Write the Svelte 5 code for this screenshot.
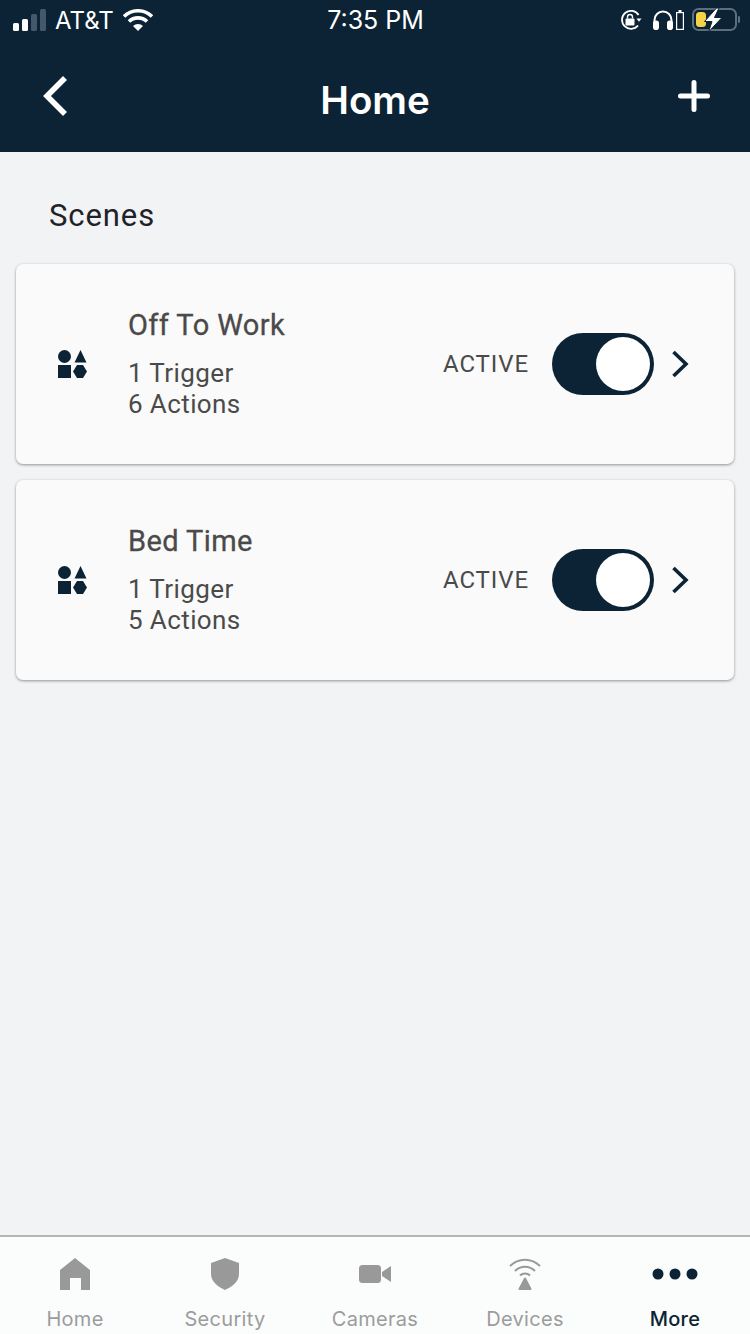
<script lang="ts">
  const scenes = [
    { name: "Off To Work", triggers: "1 Trigger", actions: "6 Actions" },
    { name: "Bed Time", triggers: "1 Trigger", actions: "5 Actions" }
  ];
  const tabs = ["Home", "Security", "Cameras", "Devices", "More"];
</script>

<main>
  <header>
    <div class="status">
      <div class="status-left">
        <svg width="34" height="22" viewBox="0 0 34 22">
          <rect x="0" y="14" width="6" height="8" rx="1.5" fill="#fff" />
          <rect x="9" y="10" width="6" height="12" rx="1.5" fill="#fff" />
          <rect x="18" y="5" width="6" height="17" rx="1.5" fill="#43586a" />
          <rect x="27" y="0" width="6" height="22" rx="1.5" fill="#43586a" />
        </svg>
        <span class="carrier">AT&amp;T</span>
        <svg class="wifi" width="30" height="22" viewBox="0 0 30 22">
          <path d="M1 7.5a20 20 0 0 1 28 0" fill="none" stroke="#fff" stroke-width="3.6" />
          <path d="M6 12.5a13 13 0 0 1 18 0" fill="none" stroke="#fff" stroke-width="3.6" />
          <path d="M10 17a7 7 0 0 1 10 0l-5 5z" fill="#fff" />
        </svg>
      </div>
      <span class="time">7:35 PM</span>
      <div class="status-right">
        <svg width="22" height="22" viewBox="0 0 22 22">
          <path d="M18 16.5A9 9 0 1 1 18.6 6" fill="none" stroke="#fff" stroke-width="1.8" />
          <path d="M16.5 9.5h5l-2.500 3.200z" fill="#fff" />
          <rect x="5.500" y="9.500" width="9" height="7" rx="1" fill="#fff" />
          <path d="M7.500 9.500V8a2.500 2.500 0 0 1 5 0v1.500" fill="none" stroke="#fff" stroke-width="1.400" />
        </svg>
        <svg class="phones" width="20" height="20" viewBox="0 0 20 20">
          <path d="M1.500 15V10a8.500 8.500 0 0 1 17 0v5" fill="none" stroke="#fff" stroke-width="2" />
          <rect x="0" y="10.500" width="6" height="9.500" rx="2.800" fill="#fff" />
          <rect x="14" y="10.500" width="6" height="9.500" rx="2.800" fill="#fff" />
        </svg>
        <svg class="pod" width="8" height="20" viewBox="0 0 8 20">
          <rect x="0.600" y="2.600" width="6.800" height="16.800" fill="none" stroke="#fff" stroke-width="1.200" />
          <rect x="2.500" y="0" width="3" height="2" fill="#fff" />
        </svg>
        <svg class="battery" width="48" height="24" viewBox="0 0 48 24">
          <rect x="1" y="1" width="43" height="21" rx="5.500" fill="none" stroke="#5d6f7d" stroke-width="2" />
          <path d="M46 8v7a3.500 3.500 0 0 0 0-7z" fill="#5d6f7d" />
          <rect x="4" y="4" width="10" height="15" rx="3.500" fill="#f5d347" />
          <path d="M24.500 0L12.500 13.500h7.500L16.500 24 30 9.500h-7.500L27 0z" fill="#fff" stroke="#0b2334" stroke-width="1" />
        </svg>
      </div>
    </div>
    <nav>
      <svg width="32" height="44" viewBox="0 0 32 44">
        <path d="M25 4L7 22l18 18" fill="none" stroke="#fff" stroke-width="5.600" />
      </svg>
      <h1>Home</h1>
      <svg width="32" height="32" viewBox="0 0 32 32">
        <path d="M16 2.500v27M2.500 16h27" fill="none" stroke="#fff" stroke-width="5" stroke-linecap="round" />
      </svg>
    </nav>
  </header>

  <section class="content">
    <h2>Scenes</h2>
    <div class="list">
      {#each scenes as scene}
        <article class="card">
          <svg class="shapes" width="29" height="28" viewBox="0 0 29 28">
            <circle cx="6.500" cy="6.500" r="6.500" fill="#0b2334" />
            <path d="M22.500 0l6 12.500h-12z" fill="#0b2334" />
            <rect x="0" y="15" width="13" height="13" fill="#0b2334" />
            <path d="M19 15h6l4 6.500-4 6.500h-6l-4-6.500z" fill="#0b2334" />
          </svg>
          <div class="info">
            <h3>{scene.name}</h3>
            <p>{scene.triggers}<br />{scene.actions}</p>
          </div>
          <span class="active">ACTIVE</span>
          <div class="toggle"><span class="knob"></span></div>
          <svg class="chev" width="18" height="28" viewBox="0 0 18 28">
            <path d="M2.500 2L15 14 2.500 26" fill="none" stroke="#0b2334" stroke-width="3.600" />
          </svg>
        </article>
      {/each}
    </div>
  </section>

  <footer>
    {#each tabs as tab, i}
      <div class="tab" class:on={tab === "More"}>
        <div class="tab-icon">
          {#if i === 0}
            <svg width="30" height="32" viewBox="0 0 30 32">
              <path d="M15 0L30 12v20H21V20H10v12H0V12z" fill="#999" />
            </svg>
          {:else if i === 1}
            <svg width="28" height="32" viewBox="0 0 28 32">
              <path d="M14 0l14 5v11c0 7-6 12.500-14 16C6 28.500 0 23 0 16V5z" fill="#999" />
            </svg>
          {:else if i === 2}
            <svg width="32" height="18" viewBox="0 0 32 18">
              <rect x="0" y="0" width="22" height="18" rx="3.500" fill="#999" />
              <path d="M23 7l9-6v16l-9-6z" fill="#999" />
            </svg>
          {:else if i === 3}
            <svg width="32" height="34" viewBox="0 0 32 34">
              <path d="M1 9a21 21 0 0 1 30 0" fill="none" stroke="#999" stroke-width="2" />
              <path d="M6 14a14 14 0 0 1 20 0" fill="none" stroke="#999" stroke-width="2" />
              <path d="M11 18.500a7 7 0 0 1 10 0" fill="none" stroke="#999" stroke-width="2" />
              <path d="M16 21.500l5.500 10.500h-11z" fill="#999" stroke="#999" stroke-width="2" stroke-linejoin="round" />
            </svg>
          {:else}
            <svg width="46" height="12" viewBox="0 0 46 12">
              <circle cx="6" cy="6" r="5.500" fill="#0b2334" />
              <circle cx="23" cy="6" r="5.500" fill="#0b2334" />
              <circle cx="40" cy="6" r="5.500" fill="#0b2334" />
            </svg>
          {/if}
        </div>
        <span>{tab}</span>
      </div>
    {/each}
  </footer>
</main>

<style>
  :global(body) {
    margin: 0;
    background: #f1f3f5;
  }

  main {
    width: 750px;
    height: 1334px;
    display: flex;
    flex-direction: column;
    overflow: hidden;
    font-family: Roboto, "Liberation Sans", sans-serif;
    background: #f1f3f5;
  }

  header {
    height: 152px;
    background: #0b2334;
    color: #fff;
    flex: none;
  }

  .status {
    height: 40px;
    padding: 0 12px 0 13px;
    display: grid;
    grid-template-columns: 1fr auto 1fr;
    align-items: center;
    font-family: Inter, "Liberation Sans", sans-serif;
    font-size: 24px;
  }

  .status-left {
    display: flex;
    align-items: center;
  }

  .carrier {
    margin-left: 8px;
  }

  .wifi {
    margin-left: 9px;
  }

  .time {
    font-size: 25px;
  }

  .status-right {
    display: flex;
    align-items: center;
    justify-content: flex-end;
  }

  .phones {
    margin-left: 11px;
  }

  .pod {
    margin-left: 3px;
  }

  .battery {
    margin-left: 8px;
    margin-right: -2px;
  }

  nav {
    height: 112px;
    padding: 0 40px;
    display: flex;
    align-items: center;
    justify-content: space-between;
  }

  h1 {
    margin: 8px 0 0;
    font-family: Inter, "Liberation Sans", sans-serif;
    font-size: 38.500px;
    font-weight: 600;
  }

  .content {
    flex: 1;
    padding: 0 16px;
  }

  h2 {
    margin: 0;
    padding: 46px 0 0 33px;
    font-size: 31px;
    line-height: 36px;
    font-weight: 400;
    letter-spacing: 0.9px;
    color: #1f2226;
  }

  .list {
    margin-top: 30px;
    display: flex;
    flex-direction: column;
    gap: 16px;
  }

  .card {
    height: 200px;
    box-sizing: border-box;
    padding: 0 45px 0 42px;
    display: flex;
    align-items: center;
    background: #fafafa;
    border-radius: 7px;
    box-shadow: 0 1px 3px rgba(0, 0, 0, 0.4);
  }

  .shapes {
    flex: none;
  }

  .info {
    margin-left: 41px;
    flex: 1;
    color: #4a4a4a;
  }

  h3 {
    margin: 0;
    font-size: 29px;
    line-height: 34px;
    font-weight: 400;
    letter-spacing: 0.4px;
    -webkit-text-stroke: 0.3px #4a4a4a;
  }

  p {
    margin: 16px 0 0;
    font-size: 26px;
    line-height: 31px;
    letter-spacing: 0.4px;
  }

  .active {
    margin-left: 1px;
    font-size: 24px;
    color: #4a4a4a;
    letter-spacing: 0.9px;
  }

  .toggle {
    margin-left: 23px;
    width: 102px;
    height: 62px;
    box-sizing: border-box;
    padding: 4px;
    display: flex;
    justify-content: flex-end;
    background: #0b2334;
    border-radius: 31px;
  }

  .knob {
    width: 54px;
    height: 54px;
    background: #fff;
    border-radius: 50%;
  }

  .chev {
    margin-left: 17px;
  }

  footer {
    height: 99px;
    flex: none;
    box-sizing: border-box;
    border-top: 2px solid #b5b5b5;
    background: #fbfcfc;
    display: grid;
    grid-template-columns: repeat(5, 1fr);
  }

  .tab {
    display: flex;
    flex-direction: column;
    align-items: center;
    font-family: Inter, "Liberation Sans", sans-serif;
    font-size: 20px;
    letter-spacing: 0.3px;
    color: #9c9c9c;
  }

  .tab.on {
    color: #0b2334;
    font-weight: 500;
  }

  .tab-icon {
    height: 34px;
    margin-top: 20px;
    display: flex;
    align-items: center;
    justify-content: center;
  }

  .tab span {
    margin-top: 16px;
  }
</style>
